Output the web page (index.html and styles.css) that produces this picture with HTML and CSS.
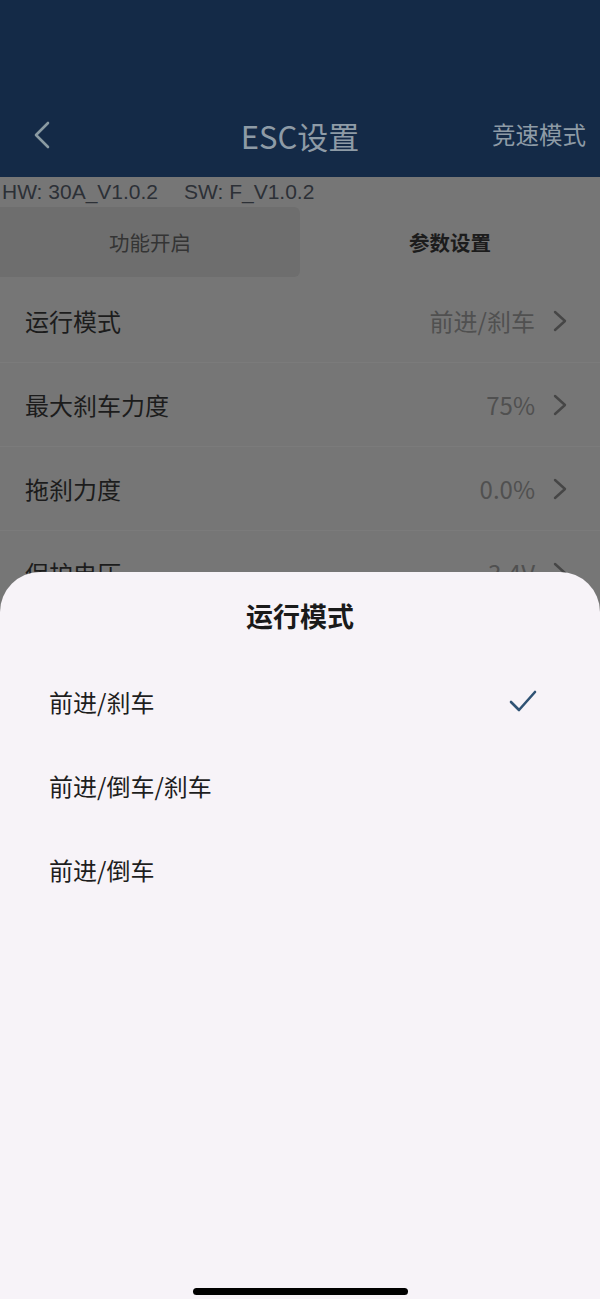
FILE: index.html
```html
<!DOCTYPE html>
<html lang="zh-CN">
<head>
<meta charset="utf-8">
<title>ESC设置</title>
<link rel="stylesheet" href="styles.css">
</head>
<body>
<div class="screen">
  <header class="header">
    <div class="nav">
      <div class="nav-left">
        <svg class="back" viewBox="0 0 18 28" width="18" height="28"><path d="M15 2 L3 14 L15 26" fill="none" stroke="#8a9aa2" stroke-width="2.6" stroke-linecap="round" stroke-linejoin="round"/></svg>
      </div>
      <div class="nav-title">ESC设置</div>
      <div class="nav-right">竞速模式</div>
    </div>
  </header>
  <div class="version"><span>HW: 30A_V1.0.2</span><span class="sw">SW: F_V1.0.2</span></div>
  <div class="tabs">
    <div class="tab tab-inactive">功能开启</div>
    <div class="tab tab-active">参数设置</div>
  </div>
  <div class="list">
    <div class="row"><span class="label">运行模式</span><span class="value">前进/刹车</span><svg class="chev" viewBox="0 0 14 22" width="14" height="22"><path d="M2 2 L12 11 L2 20" fill="none" stroke="#464646" stroke-width="2.4" stroke-linecap="round" stroke-linejoin="round"/></svg></div>
    <div class="row"><span class="label">最大刹车力度</span><span class="value">75%</span><svg class="chev" viewBox="0 0 14 22" width="14" height="22"><path d="M2 2 L12 11 L2 20" fill="none" stroke="#464646" stroke-width="2.4" stroke-linecap="round" stroke-linejoin="round"/></svg></div>
    <div class="row"><span class="label">拖刹力度</span><span class="value">0.0%</span><svg class="chev" viewBox="0 0 14 22" width="14" height="22"><path d="M2 2 L12 11 L2 20" fill="none" stroke="#464646" stroke-width="2.4" stroke-linecap="round" stroke-linejoin="round"/></svg></div>
    <div class="row"><span class="label">保护电压</span><span class="value">3.4V</span><svg class="chev" viewBox="0 0 14 22" width="14" height="22"><path d="M2 2 L12 11 L2 20" fill="none" stroke="#464646" stroke-width="2.4" stroke-linecap="round" stroke-linejoin="round"/></svg></div>
  </div>

  <div class="sheet">
    <div class="sheet-title">运行模式</div>
    <div class="option"><span>前进/刹车</span><svg class="check" viewBox="0 0 28 24" width="28" height="24"><path d="M2 13 L10 21 L26 3" fill="none" stroke="#2f5274" stroke-width="2.6" stroke-linecap="round" stroke-linejoin="round"/></svg></div>
    <div class="option"><span>前进/倒车/刹车</span></div>
    <div class="option"><span>前进/倒车</span></div>
    <div class="home-indicator"></div>
  </div>
</div>
</body>
</html>
```

FILE: styles.css
```css
* { box-sizing: border-box; }
html, body { margin: 0; padding: 0; }
body {
  font-family: "Noto Sans CJK SC", "Noto Sans", sans-serif;
  background: #767676;
}
.screen {
  position: relative;
  width: 600px;
  height: 1299px;
  overflow: hidden;
  background: #767676;
}
.header {
  height: 177px;
  background: #142a47;
  display: flex;
  align-items: flex-end;
}
.nav {
  height: 84px;
  width: 100%;
  display: grid;
  grid-template-columns: 1fr auto 1fr;
  align-items: center;
}
.nav-left { padding-left: 33px; display: flex; align-items: center; }
.back { display: block; }
.nav-title {
  font-size: 31px;
  color: #8e9ba6;
  line-height: 1;
}
.nav-right {
  justify-self: end;
  padding-right: 14px;
  font-size: 23.5px;
  color: #8e9ba6;
  line-height: 1;
}
.version {
  height: 30px;
  line-height: 30px;
  font-family: "Liberation Sans", "Noto Sans CJK SC", sans-serif;
  font-size: 21px;
  color: #2c3036;
  padding-left: 2px;
  white-space: nowrap;
  display: flex;
}
.sw { margin-left: 26px; }
.tabs {
  height: 70px;
  display: flex;
}
.tab {
  flex: 1;
  display: flex;
  align-items: center;
  justify-content: center;
  font-size: 20.5px;
}
.tab-inactive {
  background: #6e6e6e;
  color: #343434;
  border-radius: 0 6px 6px 0;
}
.tab-active {
  color: #1c1c1c;
  font-weight: 700;
}
.list { margin-top: 2px; }
.row {
  height: 84px;
  display: flex;
  align-items: center;
  padding: 0 33px 0 25px;
  border-bottom: 1px solid #7b7b7b;
}
.label {
  font-size: 24px;
  color: #1c1c1c;
  flex: 1;
}
.value {
  font-size: 24px;
  color: #505050;
  margin-right: 18px;
}
.chev { display: block; }

.sheet {
  position: absolute;
  top: 572px;
  left: 0;
  right: 0;
  bottom: 0;
  background: #f7f3f8;
  border-radius: 40px 40px 0 0;
  display: flex;
  flex-direction: column;
}
.sheet-title {
  height: 87px;
  display: flex;
  align-items: center;
  justify-content: center;
  font-size: 27px;
  font-weight: 700;
  color: #1a1a1a;
}
.option {
  height: 84px;
  display: flex;
  align-items: center;
  justify-content: space-between;
  padding: 0 63px 0 49px;
  font-size: 24px;
  color: #1e1e1e;
}
.check { display: block; }
.home-indicator {
  margin-top: auto;
  margin-bottom: 4px;
  align-self: center;
  width: 215px;
  height: 7px;
  border-radius: 4px;
  background: #000;
}
```
